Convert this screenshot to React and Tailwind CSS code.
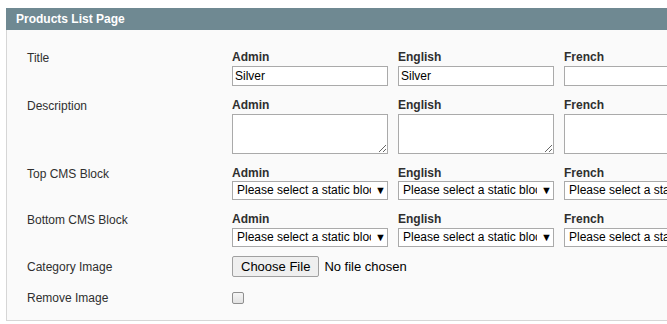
import React from 'react';

const COLS = ['Admin', 'English', 'French'];

function Label({ children }) {
  return <div className="text-[12px] leading-[14px] text-[#2f2f2f]">{children}</div>;
}

function ColHead({ children }) {
  return <div className="text-[12px] leading-[14px] font-bold text-[#2f2f2f]">{children}</div>;
}

function FakeSelect() {
  return (
    <div className="flex h-[19px] w-[156px] shrink-0 items-center border border-[#aaaaaa] bg-white pl-[4px]">
      <div className="w-[134px] shrink-0 overflow-hidden whitespace-nowrap text-[12px] leading-[17px] text-black">
        Please select a static block
      </div>
      <span className="ml-[4px] text-[11px] leading-[17px] text-black">▼</span>
    </div>
  );
}

function FieldRow({ label, children, className }) {
  return (
    <div className={`flex ${className}`}>
      <div className="w-[205px] shrink-0 pt-[1px]">
        <Label>{label}</Label>
      </div>
      <div className="flex gap-[10px]">
        {COLS.map((c) => (
          <div key={c} className="w-[156px] shrink-0">
            <ColHead>{c}</ColHead>
            {children(c)}
          </div>
        ))}
      </div>
    </div>
  );
}

export default function App() {
  const titles = { Admin: 'Silver', English: 'Silver', French: '' };

  return (
    <div className="w-[667px] h-[324px] overflow-hidden bg-white pt-[8px] pl-[6px]" style={{ fontFamily: '"Liberation Sans", Arial, sans-serif' }}>
      <div className="w-[720px]">
        <div className="h-[22px] bg-[#6f8992] pl-[10px] text-[12px] font-bold leading-[22px] text-white">
          Products List Page
        </div>
        <div className="h-[291px] border-l border-b border-[#d6d6d6] bg-[#fafafa] pl-[20px] pt-[20px]">
          <FieldRow label="Title">
            {(c) => (
              <input
                readOnly
                value={titles[c]}
                className="mt-[2px] block h-[20px] w-[156px] border border-[#aaaaaa] bg-white px-[2px] text-[12px] text-black outline-none"
              />
            )}
          </FieldRow>

          <FieldRow label="Description" className="mt-[12px]">
            {() => (
              <textarea
                readOnly
                className="mt-[2px] block h-[40px] w-[156px] border border-[#aaaaaa] bg-white outline-none"
              />
            )}
          </FieldRow>

          <FieldRow label="Top CMS Block" className="mt-[12px]">
            {() => (
              <div className="mt-[1px]">
                <FakeSelect />
              </div>
            )}
          </FieldRow>

          <FieldRow label="Bottom CMS Block" className="mt-[12px]">
            {() => (
              <div className="mt-[2px]">
                <FakeSelect />
              </div>
            )}
          </FieldRow>

          <div className="mt-[9px] flex items-center">
            <div className="w-[205px] shrink-0">
              <Label>Category Image</Label>
            </div>
            <div className="flex items-center">
              <button className="h-[21px] rounded-[2px] border border-[#a0a0a0] bg-[#efefef] px-[8px] text-[13px] leading-[19px] text-black">
                Choose File
              </button>
              <span className="ml-[5px] text-[13px] text-black">No file chosen</span>
            </div>
          </div>

          <div className="mt-[14px] flex items-center">
            <div className="w-[205px] shrink-0">
              <Label>Remove Image</Label>
            </div>
            <div className="h-[12px] w-[12px] rounded-[2px] border border-[#8f8f8f] bg-gradient-to-b from-[#f5f5f5] to-[#e2e2e2]" />
          </div>
        </div>
      </div>
    </div>
  );
}
